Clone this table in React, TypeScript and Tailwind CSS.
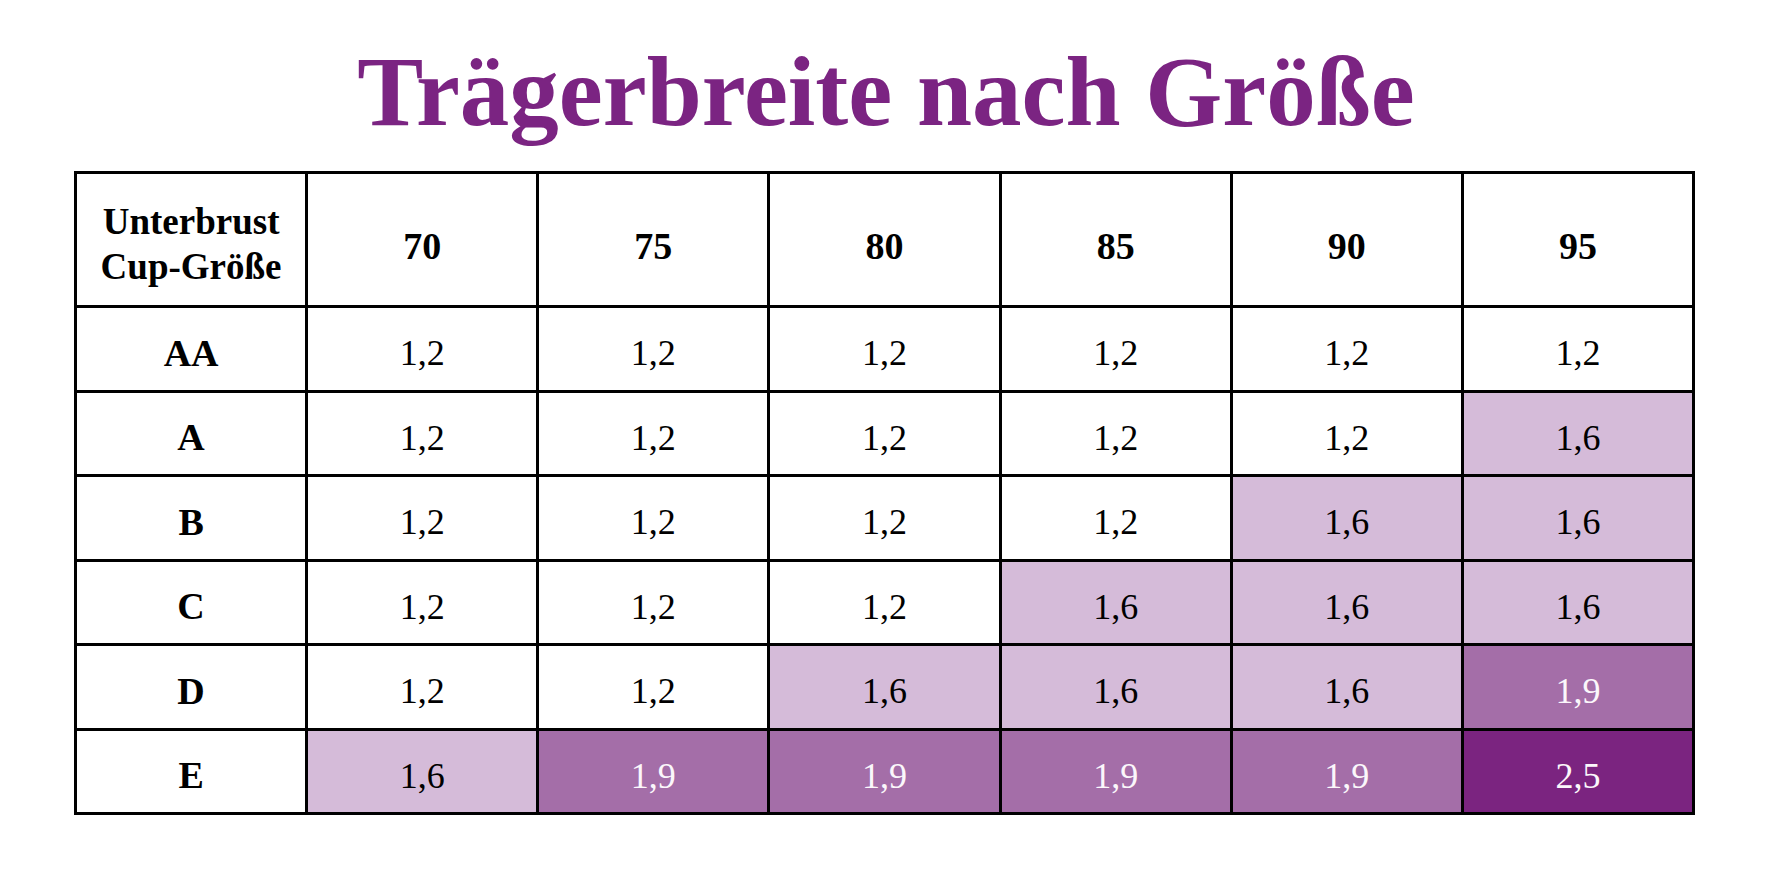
import React from "react";

type Shade = "w" | "l" | "m" | "d";

// background + text colour for each shade of the table
const shadeClass: Record<Shade, string> = {
  w: "bg-white text-black",
  l: "bg-[#d5bbd9] text-black",
  m: "bg-[#a46ea8] text-[#fbf7fb]",
  d: "bg-[#7b2480] text-[#fbf7fb]",
};

const sizes = ["70", "75", "80", "85", "90", "95"];

const rows: { cup: string; cells: [string, Shade][] }[] = [
  { cup: "AA", cells: [["1,2", "w"], ["1,2", "w"], ["1,2", "w"], ["1,2", "w"], ["1,2", "w"], ["1,2", "w"]] },
  { cup: "A", cells: [["1,2", "w"], ["1,2", "w"], ["1,2", "w"], ["1,2", "w"], ["1,2", "w"], ["1,6", "l"]] },
  { cup: "B", cells: [["1,2", "w"], ["1,2", "w"], ["1,2", "w"], ["1,2", "w"], ["1,6", "l"], ["1,6", "l"]] },
  { cup: "C", cells: [["1,2", "w"], ["1,2", "w"], ["1,2", "w"], ["1,6", "l"], ["1,6", "l"], ["1,6", "l"]] },
  { cup: "D", cells: [["1,2", "w"], ["1,2", "w"], ["1,6", "l"], ["1,6", "l"], ["1,6", "l"], ["1,9", "m"]] },
  { cup: "E", cells: [["1,6", "l"], ["1,9", "m"], ["1,9", "m"], ["1,9", "m"], ["1,9", "m"], ["2,5", "d"]] },
];

const App = () => {
  return (
    <div className="min-h-[886px] w-[1772px] bg-white font-['Liberation_Serif','Times_New_Roman',serif]">
      <h1 className="pt-[42px] text-center text-[99px] font-bold leading-[100px] text-[#7b2482]">
        Trägerbreite nach Größe
      </h1>

      <div className="ml-[74px] mt-[29px] grid w-[1621px] grid-cols-7 grid-rows-[131px_repeat(6,81.5px)] gap-[3px] bg-black p-[3px]">
        <div className="flex flex-col items-center justify-center bg-white pt-[8px] text-[37px] font-bold leading-[45px]">
          <span>Unterbrust</span>
          <span>Cup-Größe</span>
        </div>
        {sizes.map((s) => (
          <div key={s} className="flex items-center justify-center bg-white pt-[14px] text-[38px] font-bold">
            {s}
          </div>
        ))}

        {rows.map((row) => (
          <React.Fragment key={row.cup}>
            <div className="flex items-center justify-center bg-white pt-[9px] text-[38px] font-bold">{row.cup}</div>
            {row.cells.map(([value, shade], i) => (
              <div key={i} className={`flex items-center justify-center pt-[9px] text-[36px] ${shadeClass[shade]}`}>
                {value}
              </div>
            ))}
          </React.Fragment>
        ))}
      </div>
    </div>
  );
};

export default App;
